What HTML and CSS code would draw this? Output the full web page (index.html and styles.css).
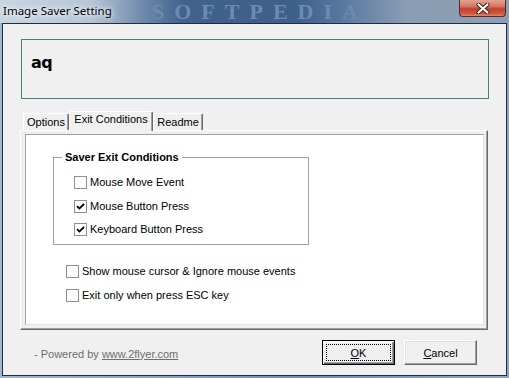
FILE: index.html
```html
<!DOCTYPE html>
<html>
<head>
<meta charset="utf-8">
<link rel="stylesheet" href="styles.css">
</head>
<body>
<div class="window">
  <div class="titlebar">
    <span class="title">Image Saver Setting</span>
    <span class="watermark">SOFTPEDIA</span>
    <span class="close">
      <svg width="14" height="11" viewBox="0 0 14 11">
        <path d="M2.5 1.5 L11.5 9.5 M11.5 1.5 L2.5 9.5" stroke="#3a1a1a" stroke-width="4" stroke-linecap="round"/>
        <path d="M2.5 1.5 L11.5 9.5 M11.5 1.5 L2.5 9.5" stroke="#ffffff" stroke-width="2.2" stroke-linecap="round"/>
      </svg>
    </span>
  </div>
  <div class="client">
    <div class="preview">aq</div>
    <div class="tabs">
      <div class="tab tab-options">Options</div>
      <div class="tab tab-active">Exit Conditions</div>
      <div class="tab tab-readme">Readme</div>
    </div>
    <div class="panel">
      <div class="page">
        <div class="group">
          <span class="group-title">Saver Exit Conditions</span>
          <div class="check"><span class="box"></span>Mouse Move Event</div>
          <div class="check"><span class="box checked"><svg width="9" height="9" viewBox="0 0 9 9"><path d="M1 4.2 L3.4 6.6 L8 2" fill="none" stroke="#000" stroke-width="1.8"/></svg></span>Mouse Button Press</div>
          <div class="check"><span class="box checked"><svg width="9" height="9" viewBox="0 0 9 9"><path d="M1 4.2 L3.4 6.6 L8 2" fill="none" stroke="#000" stroke-width="1.8"/></svg></span>Keyboard Button Press</div>
        </div>
        <div class="extra">
          <div class="check"><span class="box"></span>Show mouse cursor &amp; Ignore mouse events</div>
          <div class="check"><span class="box"></span>Exit only when press ESC key</div>
        </div>
      </div>
    </div>
    <div class="footer">
      <span class="powered">- Powered by <span class="link">www.2flyer.com</span></span>
      <span class="btn btn-default"><span class="focus"><u>O</u>K</span></span>
      <span class="btn"><u>C</u>ancel</span>
    </div>
  </div>
</div>
</body>
</html>
```
FILE: styles.css
```css
html, body {
  margin: 0;
  padding: 0;
}
body {
  width: 509px;
  height: 378px;
  overflow: hidden;
  font-family: "Liberation Sans", Arial, sans-serif;
  font-size: 11px;
  color: #000;
}
.window {
  width: 509px;
  height: 378px;
  display: flex;
  flex-direction: column;
  background: linear-gradient(to right, #9fb6cf 0%, #8aa4c2 30%, #6f8fb5 60%, #8fa6c0 100%);
}
.titlebar {
  position: relative;
  height: 23px;
  flex: none;
  display: flex;
  align-items: flex-start;
  background: linear-gradient(to right, #c9d5e1 0%, #b6c6d6 18%, #6f8aab 28%, #40628d 36%, #3d5f8a 58%, #5d7aa0 68%, #8a9db4 80%, #8d9fb4 100%);
}
.title {
  position: relative;
  z-index: 1;
  margin: 3px 0 0 3px;
  font-family: "Noto Sans", "Open Sans", sans-serif;
  font-size: 11.5px;
  line-height: 16px;
  color: #000;
  text-shadow: 0 0 6px #fff, 0 0 4px #fff;
}
.watermark {
  position: absolute;
  left: 152px;
  top: 0;
  font-family: "Liberation Serif", serif;
  font-weight: bold;
  font-size: 22px;
  letter-spacing: 10px;
  color: #6d8bb2;
  line-height: 23px;
}
.close {
  position: relative;
  z-index: 1;
  margin-left: auto;
  margin-right: 3px;
  width: 47px;
  height: 17px;
  box-sizing: border-box;
  border: 1px solid #5b2a26;
  border-top: none;
  border-radius: 0 0 4px 4px;
  background: linear-gradient(to bottom, #e3a493 0%, #d27766 40%, #c1412c 55%, #cc5a3e 85%, #e08a6a 100%);
  display: flex;
  align-items: center;
  justify-content: center;
}
.client {
  flex: 1;
  margin: 0 2px 2px 2px;
  border: 1px solid #1f2d3c;
  background: #f0f0f0;
  display: flex;
  flex-direction: column;
  padding: 15px 17px 0 17px;
  min-height: 0;
}
.preview {
  margin-left: 1px;
  height: 60px;
  box-sizing: border-box;
  border: 1px solid #3f8080;
  padding: 12px 0 0 9px;
  font-family: "DejaVu Sans", sans-serif;
  font-weight: bold;
  font-size: 16px;
  line-height: 22px;
  letter-spacing: -0.5px;
  color: #000;
}
.tabs {
  margin-top: 12px;
  height: 19px;
  display: flex;
  align-items: flex-end;
  padding-left: 3px;
  position: relative;
  z-index: 1;
}
.tab {
  height: 17px;
  box-sizing: border-box;
  border-top: 1px solid #fff;
  border-left: 1px solid #fff;
  border-right: 1px solid #696969;
  border-radius: 2px 2px 0 0;
  box-shadow: inset -1px 0 #a0a0a0;
  background: #f0f0f0;
  line-height: 16px;
  text-align: center;
}
.tab-options { width: 46px; }
.tab-readme { width: 50px; }
.tab-active {
  width: 84px;
  height: 20px;
  margin-bottom: -1px;
  line-height: 15px;
}
.panel {
  margin-right: 1px;
  height: 200px;
  box-sizing: border-box;
  border-top: 1px solid #fff;
  border-left: 1px solid #fff;
  border-right: 1px solid #696969;
  border-bottom: 1px solid #696969;
  box-shadow: inset -1px -1px #a0a0a0;
  padding: 3px 3px 4px 4px;
  display: flex;
}
.page {
  flex: 1;
  border-top: 1px solid #a0a0a0;
  border-left: 1px solid #a0a0a0;
  border-right: 1px solid #e3e3e3;
  border-bottom: 1px solid #e3e3e3;
  background: #fff;
}
.group {
  position: relative;
  margin: 22px 0 0 27px;
  width: 256px;
  box-sizing: border-box;
  border: 1px solid #a0a0a0;
  padding: 18px 0 8px 20px;
  display: flex;
  flex-direction: column;
  gap: 10.5px;
}
.group-title {
  position: absolute;
  left: 8px;
  top: -8px;
  padding: 0 3px;
  background: #fff;
  font-weight: bold;
  font-size: 11px;
  line-height: 14px;
}
.check {
  display: flex;
  align-items: center;
  height: 13px;
  line-height: 13px;
  gap: 3px;
}
.box {
  width: 13px;
  height: 13px;
  box-sizing: border-box;
  border: 1px solid #8e8f8f;
  background: #fff;
  display: flex;
  align-items: center;
  justify-content: center;
  flex: none;
}
.extra {
  margin: 20px 0 0 40px;
  display: flex;
  flex-direction: column;
  gap: 11px;
}
.footer {
  margin-top: 10px;
  display: flex;
  align-items: center;
  padding: 0 12px 0 14px;
  gap: 9px;
}
.powered {
  flex: 1;
  color: #6d6d6d;
  padding-top: 2px;
}
.link {
  text-decoration: underline;
}
.btn {
  width: 73px;
  height: 25px;
  box-sizing: border-box;
  border: 1px solid;
  border-color: #fff #696969 #696969 #fff;
  box-shadow: inset -1px -1px #a0a0a0, inset 1px 1px #e3e3e3;
  background: #f0f0f0;
  display: flex;
  align-items: center;
  justify-content: center;
}
.btn-default {
  border-color: #000;
  box-shadow: inset 1px 1px #fff, inset -1px -1px #696969, inset -2px -2px #a0a0a0;
  padding: 3px;
}
.focus {
  flex: 1;
  align-self: stretch;
  border: 1px dotted #000;
  display: flex;
  align-items: center;
  justify-content: center;
}
```
